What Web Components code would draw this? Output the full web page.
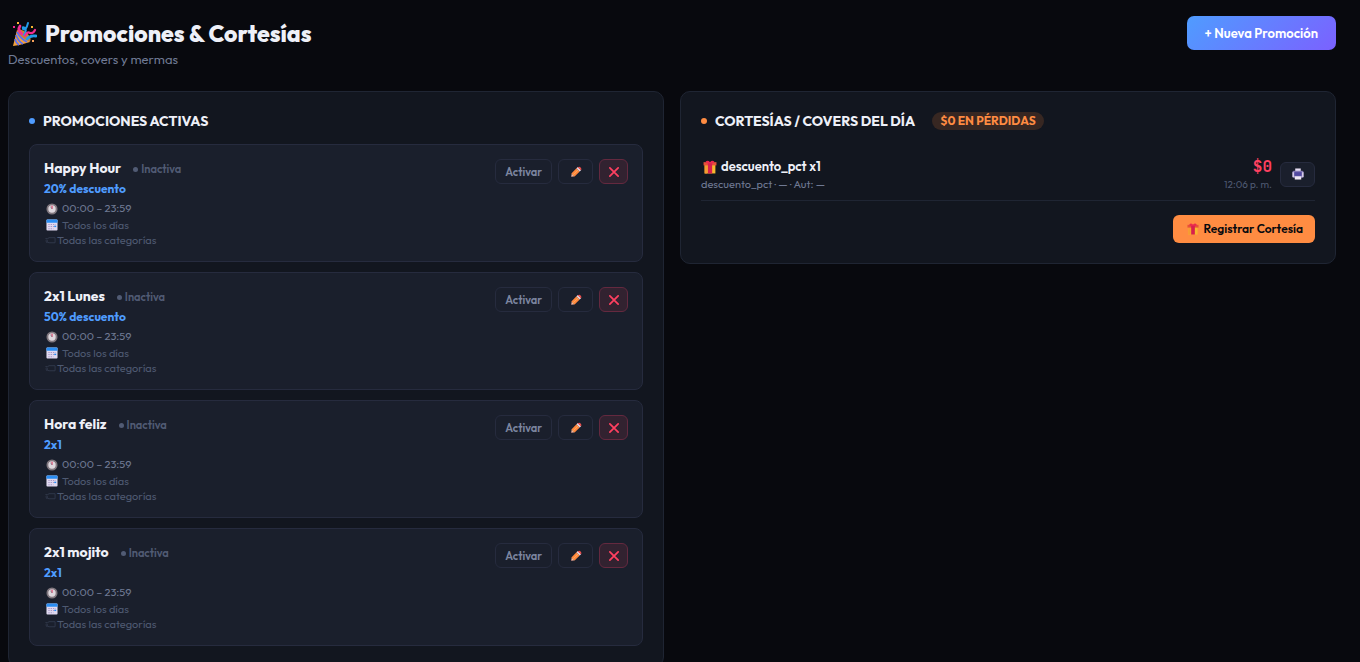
<!DOCTYPE html>
<html lang="es">
<head>
<meta charset="utf-8">
<meta name="viewport" content="width=device-width, initial-scale=1">
<title>Promociones &amp; Cortesías</title>
<style>
  :root {
    --bg: #08090e;
    --panel: #12161f;
    --card: #1a1f2c;
    --line: #1f2533;
    --line-strong: #262b3e;
    --text: #eef0f8;
    --muted: #6f7993;
    --dim: #4e5971;
    --blue: #4f9cff;
    --orange: #ff8c42;
    --red: #ff4060;
  }

  body {
    margin: 0;
    background: var(--bg);
    color: var(--text);
    font-family: Outfit, Lato, "Liberation Sans", sans-serif;
    font-size: 12px;
  }
</style>
</head>
<body>
<promo-page></promo-page>

<script>
const icons = {
  party: `
    <path d="M6 9 L19 21 Q10 24 2 25 Z" fill="#f6a23a"/>
    <path d="M6 9 Q8 16 19 21 Q21 17 16 12 Q10 7 6 9Z" fill="#c9822e"/>
    <path d="M5 14 Q7 20 12 23 M4 18 Q5 22 8 24 M6 11 Q10 18 16 21" fill="none" stroke="#5a6ff0" stroke-width="1.8"/>
    <path d="M11 13 Q6 9 9 5" fill="none" stroke="#f12d91" stroke-width="2.8" stroke-linecap="round"/>
    <path d="M13 14 Q16 9 14 7 Q11 5 12 8 Q15 10 17 2" fill="none" stroke="#239be8" stroke-width="2" stroke-linecap="round"/>
    <path d="M14 15 Q16 10 19 12 Q22 13 24 9" fill="none" stroke="#f12d91" stroke-width="2.2" stroke-linecap="round"/>
    <path d="M16 18 Q19 14 25 15" fill="none" stroke="#239be8" stroke-width="2.8" stroke-linecap="round"/>
    <rect x="6" y="1" width="2" height="2" fill="#ffb638"/><rect x="2" y="5" width="2" height="2" fill="#f12d91"/>
    <rect x="20" y="5" width="2" height="2" fill="#f7b731"/><rect x="21" y="19" width="2" height="2" fill="#f7a15b"/>`,
  clock: `
    <circle cx="13" cy="13" r="10" fill="#ded8de" stroke="#81787f" stroke-width="4"/>
    <path d="M13 13V6" stroke="#e0355f" stroke-width="2.4"/><path d="M13 13l-3-5" stroke="#8d8390" stroke-width="2"/>`,
  calendar: `
    <rect x="1" y="1" width="24" height="24" rx="2" fill="#e0daf0"/>
    <path d="M1 8V3q0-2 2-2h20q2 0 2 2v5z" fill="#2a8df2"/>
    <path d="M5 12h16M5 16h16M5 21h11" stroke="#a999c7" stroke-width="2.2" stroke-dasharray="3 2"/>
    <path d="M18 16h4" stroke="#258df5" stroke-width="3"/>`,
  tag: `
    <path d="M3 10h5l3-2h13v11H11l-3-1H5" fill="none" stroke="#343c50" stroke-width="1.8"/>
    <circle cx="6" cy="15" r="2" fill="none" stroke="#343c50" stroke-width="1.5"/>`,
  pencil: `
    <path d="M2 24l2-8 6 6z" fill="#f0bba0"/><path d="M2 24l1-4 3 3z" fill="#8b5a60"/>
    <path d="M3 16L14 5l7 7-11 11z" fill="#ff873d"/><path d="M7 19L18 8" stroke="#ffab5a" stroke-width="2"/>
    <path d="M14 5l3-3 7 7-3 3z" fill="#e8d6e2"/><path d="M17 3q3-3 6 0t1 6z" fill="#f4504f"/>`,
  cross: `<path d="M4 4l18 18M22 4L4 22" stroke="#ff4060" stroke-width="3.8" stroke-linecap="round"/>`,
  gift: `
    <path d="M3 8h20v17H3z" fill="#f7b82f"/><path d="M3 8h5v17H3z" fill="#f69a32"/>
    <path d="M1 4h24v6H1z" fill="#e8503a"/>
    <path d="M9 5h8v20H9z" fill="#d81f4d"/>
    <path d="M13 6Q5 8 5 3q4-4 8 1 4-5 8-1 0 5-8 3z" fill="#e92a4e"/>`,
  printer: `
    <path d="M7 1h12v8H7z" fill="#e6def3"/><rect x="1" y="6" width="24" height="15" rx="3" fill="#8378b5"/>
    <path d="M1 9h4v11H1zM21 9h4v11h-4z" fill="#d5cce6"/>
    <path d="M5 9h16v8H5z" fill="#5148a0"/><path d="M6 18h14v7H6z" fill="#efe8f5"/>`,
};

class UiIcon extends HTMLElement {
  constructor() {
    super();
    this.attachShadow({ mode: 'open' });
  }

  connectedCallback() {
    this.shadowRoot.innerHTML = /* html */ `
      <style>
        :host {
          display: inline-block;
          flex: none;
          width: var(--icon-size, 12px);
          height: var(--icon-size, 12px);
        }
        svg { display: block; width: 100%; height: 100%; }
      </style>
      <svg viewBox="0 0 26 26" aria-hidden="true">${icons[this.getAttribute('name')]}</svg>
    `;
  }
}

class UiButton extends HTMLElement {
  constructor() {
    super();
    this.attachShadow({ mode: 'open' });
  }

  connectedCallback() {
    const label = this.getAttribute('label');

    this.shadowRoot.innerHTML = /* html */ `
      <style>
        :host { display: block; flex: none; }
        button {
          display: flex;
          align-items: center;
          justify-content: center;
          gap: 4px;
          box-sizing: border-box;
          height: 25px;
          padding: 0 9px;
          border: 1px solid var(--line-strong);
          border-radius: 6px;
          background: var(--card);
          color: #7d86a0;
          font: inherit;
          font-size: 11px;
          font-weight: 600;
          line-height: 16px;
          white-space: nowrap;
          cursor: pointer;
        }
        button:focus-visible { outline: 2px solid var(--blue); outline-offset: 1px; }
        :host([kind="icon"]) button { width: 35px; }
        :host([kind="danger"]) button {
          width: 29px;
          border-color: #64293f;
          background: #322230;
        }
        :host([kind="primary"]) button {
          height: 34px;
          padding: 0 18px;
          border: 0;
          border-radius: 7px;
          background: linear-gradient(135deg, #4f9cff, #7b61ff);
          color: #fff;
          font-size: 13px;
        }
        :host([kind="warm"]) button {
          height: 28px;
          padding: 0 12px 0 14px;
          border: 0;
          background: var(--orange);
          color: #08090e;
          font-size: 12px;
        }
      </style>
      <button type="button" ${label ? `aria-label="${label}" title="${label}"` : ''}><slot></slot></button>
    `;
  }
}

class PromoPanel extends HTMLElement {
  constructor() {
    super();
    this.attachShadow({ mode: 'open' });
  }

  connectedCallback() {
    this.shadowRoot.innerHTML = /* html */ `
      <style>
        :host {
          display: block;
          padding: 20px;
          border: 1px solid var(--line);
          border-radius: 10px;
          background: var(--panel);
        }
        header {
          display: flex;
          align-items: center;
          gap: 17px;
          margin-bottom: 14px;
        }
        h2 {
          display: flex;
          align-items: center;
          gap: 8px;
          margin: 0;
          font-size: 14px;
          font-weight: 700;
          line-height: 18px;
          text-transform: uppercase;
        }
        h2::before {
          content: '';
          width: 6px;
          height: 6px;
          border-radius: 50%;
          background: var(--dot, var(--blue));
        }
      </style>
      <header>
        <h2>${this.getAttribute('heading')}</h2>
        <slot name="badge"></slot>
      </header>
      <slot></slot>
    `;
  }
}

class PromoItem extends HTMLElement {
  constructor() {
    super();
    this.attachShadow({ mode: 'open' });
  }

  connectedCallback() {
    this.shadowRoot.innerHTML = /* html */ `
      <style>
        :host {
          display: flex;
          align-items: flex-start;
          justify-content: space-between;
          padding: 14px;
          border: 1px solid var(--line-strong);
          border-radius: 8px;
          background: var(--card);
        }
        .title { display: flex; align-items: baseline; gap: 12px; }
        h3 { margin: 0; font-size: 14px; font-weight: 700; line-height: 19px; }
        .status { color: #515b74; font-size: 11px; font-weight: 600; line-height: 14px; }
        .status::before {
          content: '';
          display: inline-block;
          width: 5px;
          height: 5px;
          margin-right: 3px;
          border-radius: 50%;
          background: currentColor;
          vertical-align: 1px;
        }
        p { margin: 0; }
        .deal { color: var(--blue); font-size: 12px; font-weight: 700; line-height: 22px; }
        .meta { display: flex; align-items: center; gap: 4px; padding-left: 2px; color: var(--dim); font-size: 11px; line-height: 16px; }
        .hours { color: var(--muted); line-height: 17px; }
        .scope { gap: 1px; padding-left: 0; line-height: 14px; }
        .actions { display: flex; gap: 6px; }
      </style>
      <div>
        <div class="title">
          <h3>${this.getAttribute('name')}</h3>
          <span class="status">Inactiva</span>
        </div>
        <p class="deal">${this.getAttribute('deal')}</p>
        <p class="meta hours"><ui-icon name="clock"></ui-icon>00:00 – 23:59</p>
        <p class="meta"><ui-icon name="calendar"></ui-icon>Todos los días</p>
        <p class="meta scope"><ui-icon name="tag"></ui-icon>Todas las categorías</p>
      </div>
      <div class="actions">
        <ui-button>Activar</ui-button>
        <ui-button kind="icon" label="Editar"><ui-icon name="pencil"></ui-icon></ui-button>
        <ui-button kind="danger" label="Eliminar"><ui-icon name="cross"></ui-icon></ui-button>
      </div>
    `;
  }
}

class CourtesyItem extends HTMLElement {
  constructor() {
    super();
    this.attachShadow({ mode: 'open' });
  }

  connectedCallback() {
    this.shadowRoot.innerHTML = /* html */ `
      <style>
        :host {
          display: flex;
          align-items: center;
          gap: 8px;
          padding: 12px 0 8px;
          border-bottom: 1px solid var(--line);
        }
        .info { flex: 1; }
        h3 { display: flex; align-items: center; gap: 4px; margin: 0; padding-left: 2px; font-size: 13px; font-weight: 600; line-height: 21px; --icon-size: 14px; }
        p { margin: 0; color: var(--muted); font-size: 11px; line-height: 15px; }
        .total { text-align: right; }
        .amount { color: var(--red); font-family: "JetBrains Mono", "DejaVu Sans Mono", monospace; font-size: 16px; font-weight: 700; line-height: 21px; }
        .time { color: var(--dim); font-size: 10px; }
      </style>
      <div class="info">
        <h3><ui-icon name="gift"></ui-icon>descuento_pct x1</h3>
        <p>descuento_pct · — · Aut: —</p>
      </div>
      <div class="total">
        <p class="amount">$0</p>
        <p class="time">12:06 p. m.</p>
      </div>
      <ui-button kind="icon" label="Imprimir"><ui-icon name="printer"></ui-icon></ui-button>
    `;
  }
}

class PromoPage extends HTMLElement {
  constructor() {
    super();
    this.attachShadow({ mode: 'open' });
  }

  connectedCallback() {
    const promos = [
      ['Happy Hour', '20% descuento'],
      ['2x1 Lunes', '50% descuento'],
      ['Hora feliz', '2x1'],
      ['2x1 mojito', '2x1'],
    ];

    this.shadowRoot.innerHTML = /* html */ `
      <style>
        :host {
          display: block;
          box-sizing: border-box;
          height: 100vh;
          padding: 16px 24px 0 8px;
          overflow: auto;
          scrollbar-width: none;
        }
        .top {
          display: flex;
          align-items: flex-start;
          justify-content: space-between;
          margin-bottom: 24px;
        }
        h1 {
          display: flex;
          align-items: center;
          gap: 8px;
          margin: 0;
          padding-left: 3px;
          font-size: 23px;
          font-weight: 800;
          line-height: 35px;
          --icon-size: 26px;
        }
        .top p { margin: 0; color: var(--muted); font-size: 13px; line-height: 16px; }
        .columns {
          display: grid;
          grid-template-columns: 1fr 1fr;
          align-items: start;
          gap: 16px;
        }
        .list { display: flex; flex-direction: column; gap: 10px; }
        .badge {
          padding: 0 8px;
          border-radius: 9px;
          background: #372722;
          color: var(--orange);
          font-size: 12px;
          font-weight: 700;
          line-height: 18px;
          text-transform: uppercase;
        }
        .courtesies { --dot: var(--orange); }
        .foot { display: flex; justify-content: flex-end; margin-top: 14px; }
      </style>
      <div class="top">
        <div>
          <h1><ui-icon name="party"></ui-icon>Promociones &amp; Cortesías</h1>
          <p>Descuentos, covers y mermas</p>
        </div>
        <ui-button kind="primary">+ Nueva Promoción</ui-button>
      </div>
      <div class="columns">
        <promo-panel heading="Promociones activas">
          <div class="list">
            ${promos.map(([name, deal]) => `<promo-item name="${name}" deal="${deal}"></promo-item>`).join('')}
          </div>
        </promo-panel>
        <promo-panel class="courtesies" heading="Cortesías / Covers del día">
          <span class="badge" slot="badge">$0 en pérdidas</span>
          <courtesy-item></courtesy-item>
          <div class="foot">
            <ui-button kind="warm"><ui-icon name="gift"></ui-icon>Registrar Cortesía</ui-button>
          </div>
        </promo-panel>
      </div>
    `;
  }
}

customElements.define('ui-icon', UiIcon);
customElements.define('ui-button', UiButton);
customElements.define('promo-panel', PromoPanel);
customElements.define('promo-item', PromoItem);
customElements.define('courtesy-item', CourtesyItem);
customElements.define('promo-page', PromoPage);
</script>
</body>
</html>
